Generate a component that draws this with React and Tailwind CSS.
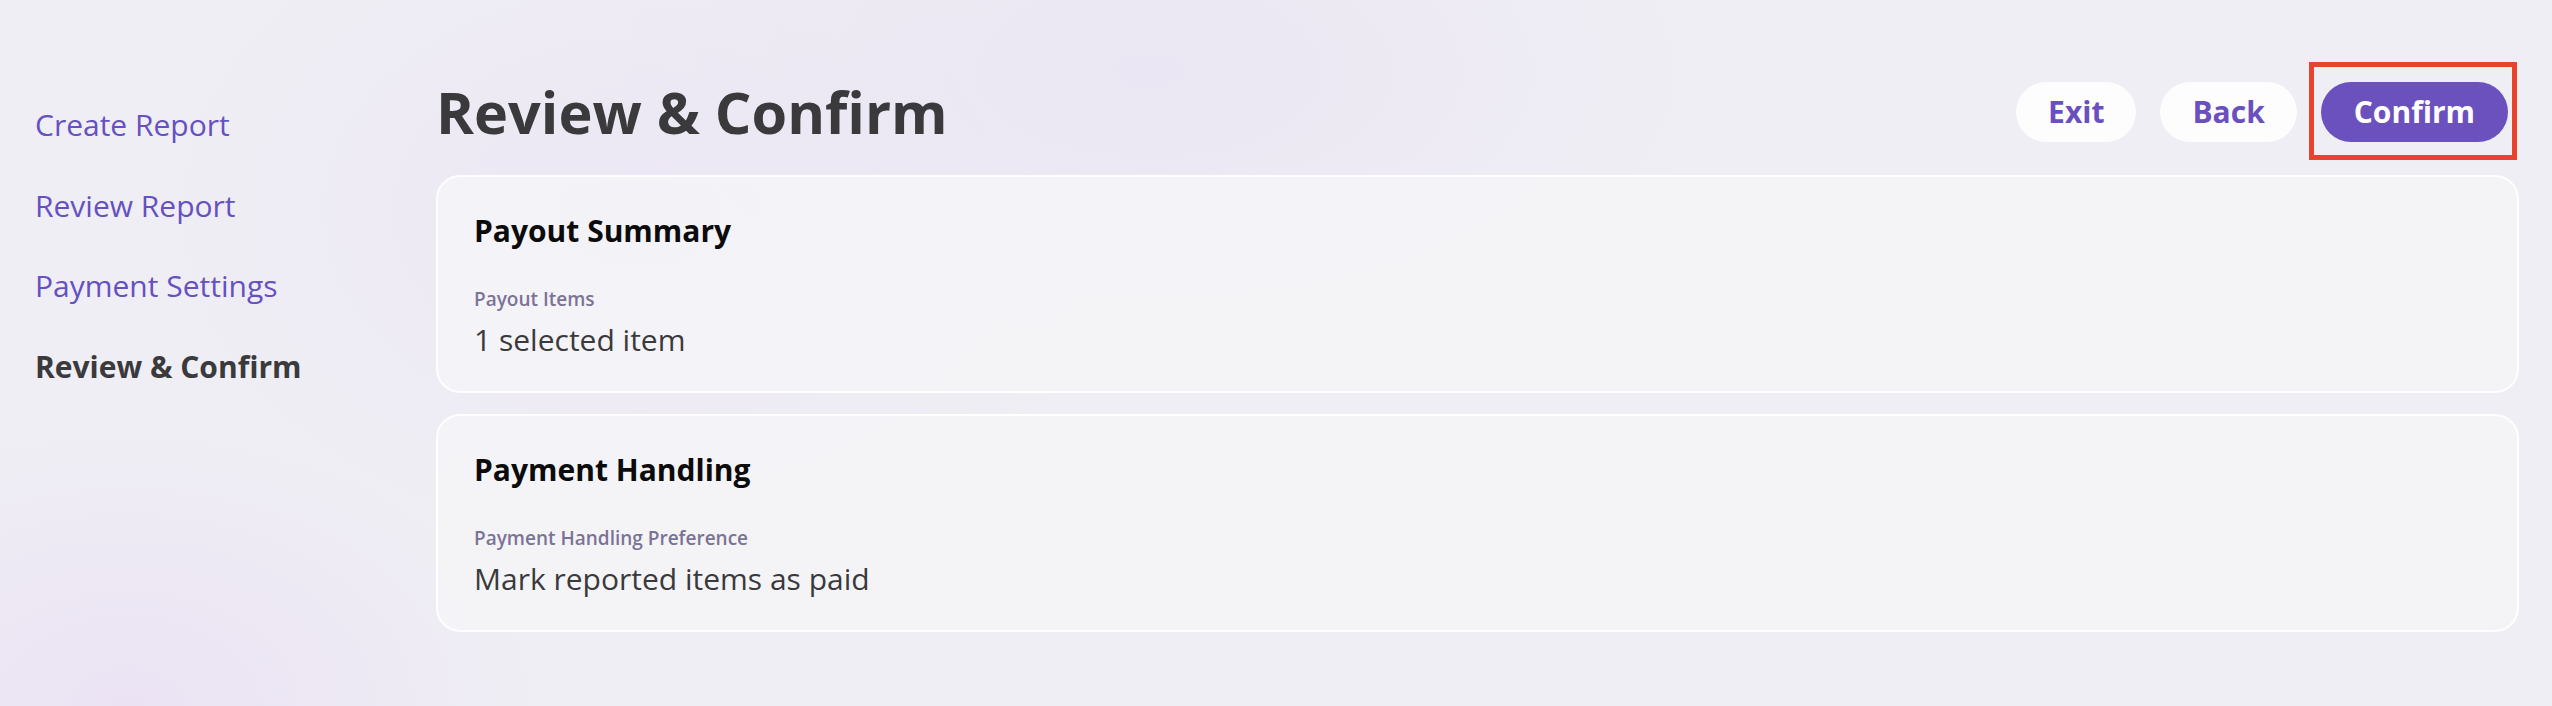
import React from "react";

const font = { fontFamily: '"Open Sans", "Noto Sans", sans-serif' };

function NavItem({ children, active }) {
  return (
    <div
      className={
        active
          ? "text-[30px] leading-[40px] font-bold text-[#3a3a3c]"
          : "text-[30px] leading-[40px] font-normal text-[#6650c2]"
      }
    >
      {children}
    </div>
  );
}

function Card({ title, label, value }) {
  return (
    <div className="rounded-[24px] border-2 border-white/90 bg-[#f5f5f8]/80 pl-[36px] pr-[34px] pt-[34px] pb-[31px]">
      <div className="text-[30px] leading-[40px] font-bold text-[#0b0b0c]">{title}</div>
      <div className="mt-[34px] text-[19px] leading-[28px] font-semibold text-[#7b7396]">{label}</div>
      <div className="mt-[7px] text-[30px] leading-[40px] font-normal text-[#3a3a3c]">{value}</div>
    </div>
  );
}

export default function App() {
  return (
    <div
      style={font}
      className="min-h-screen w-full flex bg-[#efeef4] bg-[radial-gradient(ellipse_600px_400px_at_5%_100%,#ebe3f4_0%,transparent_70%),radial-gradient(ellipse_700px_500px_at_25%_30%,#ece7f4_0%,transparent_70%),radial-gradient(ellipse_800px_400px_at_45%_10%,#ebe6f3_0%,transparent_70%)]"
    >
      <nav className="w-[436px] shrink-0 pl-[35px] pt-[105px] flex flex-col gap-[40.5px]">
        <NavItem>Create Report</NavItem>
        <NavItem>Review Report</NavItem>
        <NavItem>Payment Settings</NavItem>
        <NavItem active>Review &amp; Confirm</NavItem>
      </nav>
      <main className="flex-1 pr-[33px] pt-[72px]">
        <header className="flex items-center justify-between h-[80px]">
          <h1 className="text-[57.6px] leading-[80px] font-bold text-[#3a3a3c]">Review &amp; Confirm</h1>
          <div className="flex items-center gap-[24px] pr-[11px]">
            <button className="h-[60px] rounded-full bg-[#fdfdfd] px-[32px] text-[30px] leading-[40px] font-bold text-[#6a4fbf]">
              Exit
            </button>
            <button className="h-[60px] rounded-full bg-[#fdfdfd] px-[32px] text-[30px] leading-[40px] font-bold text-[#6a4fbf]">
              Back
            </button>
            <div className="relative">
              <button className="h-[60px] rounded-full bg-[#6b51bd] px-[33px] text-[30px] leading-[40px] font-bold text-white">
                Confirm
              </button>
              <div className="pointer-events-none absolute left-[-12px] right-[-9px] top-[-20px] bottom-[-18px] border-[5px] border-[#e8432d]" />
            </div>
          </div>
        </header>
        <div className="mt-[23px] flex flex-col gap-[21px]">
          <Card title="Payout Summary" label="Payout Items" value="1 selected item" />
          <Card
            title="Payment Handling"
            label="Payment Handling Preference"
            value="Mark reported items as paid"
          />
        </div>
      </main>
    </div>
  );
}
